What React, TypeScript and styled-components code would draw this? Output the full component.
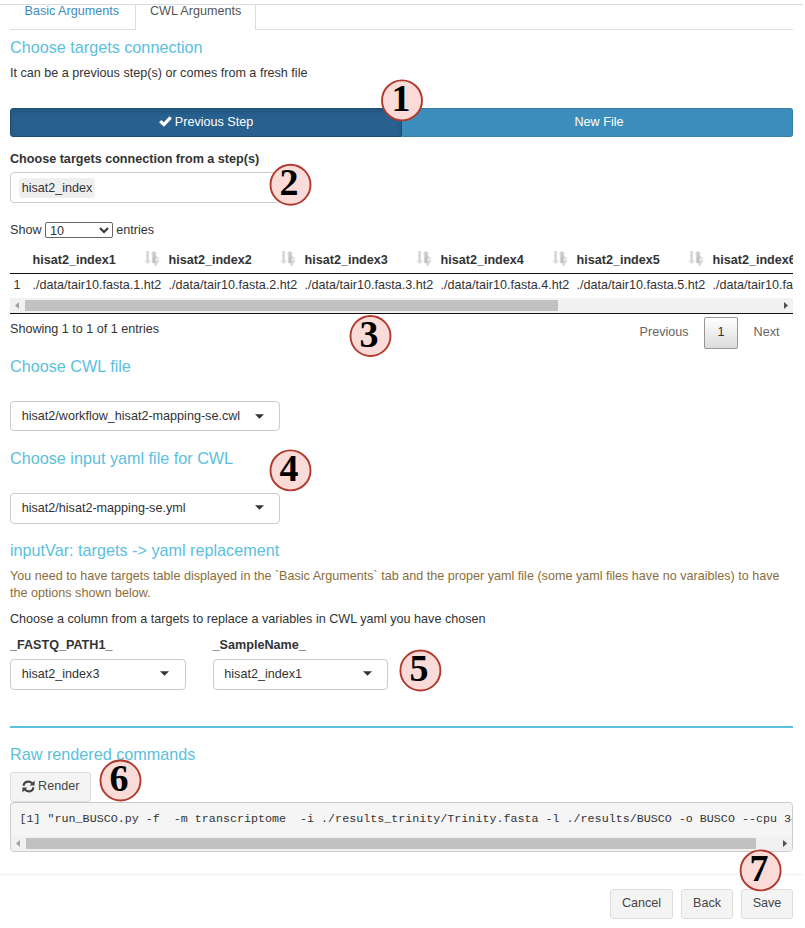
import React from "react";
import styled, { createGlobalStyle } from "styled-components";

const GlobalStyle = createGlobalStyle`
  * { box-sizing: border-box; }
  body {
    margin: 0;
    background: #fff;
    color: #333;
    font-family: "Liberation Sans", Arial, sans-serif;
    font-size: 12.6px;
    line-height: 18px;
  }
`;

const Page = styled.div`
  position: relative;
  width: 805px;
  height: 928px;
  overflow: hidden;
  padding-top: 4px;
`;

const Modal = styled.div`
  width: 803px;
  border-top: 1px solid #d9dce1;
`;

const Body = styled.div`
  display: flex;
  flex-direction: column;
  height: 869px;
  padding: 0 10px;
`;

const Tabs = styled.div`
  display: flex;
  height: 25px;
  border-bottom: 1px solid #ddd;
`;

const Tab = styled.div<{ $active?: boolean }>`
  height: 25px;
  padding: ${(p) => (p.$active ? "0 14px" : "0 16px 0 14.5px")};
  line-height: 13px;
  color: ${(p) => (p.$active ? "#555" : "#3c8dbc")};
  background: ${(p) => (p.$active ? "#fff" : "transparent")};
  border: solid #ddd;
  border-width: ${(p) => (p.$active ? "0 1px" : "0")};
`;

const Heading = styled.h4<{ $top: number }>`
  margin: ${(p) => p.$top}px 0 0;
  height: 18px;
  font-size: 16.2px;
  font-weight: 400;
  line-height: 18px;
  color: #5bc0de;
`;

const Text = styled.p<{ $top: number; $warn?: boolean }>`
  margin: ${(p) => p.$top}px 0 0;
  line-height: ${(p) => (p.$warn ? 17 : 18)}px;
  color: ${(p) => (p.$warn ? "#8a6d3b" : "#333")};
`;

const Label = styled.label<{ $top: number }>`
  display: block;
  margin-top: ${(p) => p.$top}px;
  height: 18px;
  font-weight: 700;
`;

const Segmented = styled.div`
  display: grid;
  grid-template-columns: 392px 391px;
  margin-top: 26px;
  height: 29px;
`;

const Segment = styled.button<{ $active?: boolean }>`
  display: flex;
  justify-content: center;
  align-items: center;
  gap: 3px;
  padding: ${(p) => (p.$active ? "0 0 2px" : "0 0 2px 3px")};
  font: inherit;
  color: #fff;
  background: ${(p) => (p.$active ? "#286090" : "#3c8dbc")};
  border: 1px solid ${(p) => (p.$active ? "#204d74" : "#367fa9")};
  border-left-color: ${(p) => (p.$active ? "#204d74" : "#3c8dbc")};
  border-radius: ${(p) => (p.$active ? "3px 0 0 3px" : "0 3px 3px 0")};
  box-shadow: ${(p) => (p.$active ? "inset 0 3px 5px rgba(0, 0, 0, 0.125)" : "none")};
`;

const TagInput = styled.div`
  display: flex;
  align-items: center;
  margin-top: 4px;
  width: 270px;
  height: 31px;
  padding-left: 8px;
  border: 1px solid #ccc;
  border-radius: 4px;
`;

const Tag = styled.span`
  height: 20px;
  padding: 0 2.7px;
  line-height: 20px;
  background: #efefef;
  border-radius: 3px;
`;

const LengthRow = styled.div`
  display: flex;
  align-items: center;
  gap: 3.4px;
  margin-top: 18px;
  height: 18px;
`;

const LengthSelect = styled.select`
  width: 68px;
  height: 16px;
  padding: 0 0 2px;
  font: inherit;
  line-height: 12px;
  color: #333;
  background: #fff;
  border: 1px solid #666;
  border-radius: 2px;
`;

const TableFrame = styled.div`
  margin-top: 6px;
  height: 69px;
  overflow: hidden;
  border-bottom: 1px solid #111;
`;

const Row = styled.div<{ $head?: boolean }>`
  display: grid;
  grid-template-columns: 13.5px repeat(6, 136px);
  height: ${(p) => (p.$head ? 29 : 24)}px;
  line-height: ${(p) => (p.$head ? "31px" : "23px")};
  font-weight: ${(p) => (p.$head ? 700 : 400)};
  border-bottom: ${(p) => (p.$head ? "1px solid #111" : "0")};
  white-space: nowrap;
`;

const Cell = styled.div`
  display: flex;
  justify-content: space-between;
  padding: 0 0 0 9px;
`;

const IndexCell = styled.div`
  padding-left: 3.5px;
`;

const SortSvg = styled.svg`
  display: block;
  margin-top: 5px;
`;

const Scrollbar = styled.div<{ $h: number }>`
  display: flex;
  align-items: center;
  justify-content: space-between;
  height: ${(p) => p.$h}px;
  background: #f1f1f1;
`;

const Thumb = styled.div<{ $w: number; $gap: number }>`
  width: ${(p) => p.$w}px;
  height: 11px;
  margin-left: ${(p) => p.$gap}px;
  margin-right: auto;
  background: #c1c1c1;
`;

const ArrowSvg = styled.svg`
  margin: 0 5px;
`;

const TableFooter = styled.div`
  display: flex;
  justify-content: space-between;
  margin-top: 3px;
  height: 32px;
`;

const Info = styled.div`
  padding-top: 3px;
`;

const Pager = styled.div`
  display: flex;
  line-height: 30px;
  color: #666;
`;

const PageLink = styled.span`
  padding: 0 13.5px 0 15.5px;

  &:first-child {
    padding-right: 15.5px;
  }
`;

const CurrentPage = styled.span`
  width: 34px;
  line-height: 28px;
  text-align: center;
  color: #333;
  border: 1px solid #979797;
  border-radius: 2px;
  background: linear-gradient(#fff, #dcdcdc);
`;

const Select = styled.div<{ $w: number; $h?: number; $top: number; $end?: number }>`
  display: flex;
  align-items: center;
  justify-content: space-between;
  width: ${(p) => p.$w}px;
  height: ${(p) => p.$h ?? 31}px;
  margin-top: ${(p) => p.$top}px;
  padding: 0 ${(p) => p.$end ?? 15}px ${(p) => (p.$h ? 0 : 2)}px 10.7px;
  border: 1px solid #ccc;
  border-radius: 4px;
`;

const Caret = styled.svg`
  display: block;
`;

const Fields = styled.div`
  display: flex;
  gap: 26.6px;
  margin-top: 8px;
`;

const Rule = styled.div`
  margin-top: 36px;
  height: 2px;
  flex: none;
  background: #5bc0de;
`;

const Button = styled.button<{ $w: number }>`
  display: flex;
  align-items: center;
  justify-content: center;
  gap: 3.5px;
  width: ${(p) => p.$w}px;
  height: 30px;
  padding: 0 0 2px;
  font: inherit;
  color: #444;
  background: #f4f4f4;
  border: 1px solid #ddd;
  border-radius: 3px;
`;

const RenderRow = styled.div`
  margin-top: 9px;
`;

const Output = styled.div`
  height: 50px;
  overflow: hidden;
  background: #f5f5f5;
  border: 1px solid #ccc;
  border-radius: 4px;
`;

const Code = styled.pre`
  margin: 0;
  height: 33px;
  padding: 8px 0 0 8.5px;
  font-family: "Liberation Mono", monospace;
  font-size: 11.7px;
  line-height: 17px;
`;

const Footer = styled.div`
  display: flex;
  justify-content: flex-end;
  gap: 8px;
  padding: 14px 10px 0;
  border-top: 1px solid #f1f1f1;
`;

const Badge = styled.div<{ $x: number; $y: number }>`
  position: absolute;
  left: ${(p) => Math.floor(p.$x) - 22}px;
  top: ${(p) => Math.floor(p.$y) - 22}px;
  display: grid;
  width: 44px;
  height: 44px;
  color: #000;
  font: 700 38px/41px "Liberation Serif", "Times New Roman", serif;
  text-align: center;

  > * {
    grid-area: 1 / 1;
  }
`;

const Digit = styled.span`
  padding-right: 2px;
`;

const Ring = ({ dx, dy }: { dx: number; dy: number }) => (
  <svg width="44" height="44" viewBox="0 0 44 44">
    <circle cx={22 + dx} cy={22 + dy} r="20" fill="#fadbd8" stroke="#b03a2e" strokeWidth="1.9" />
  </svg>
);

const CheckIcon = () => (
  <svg width="13" height="11" viewBox="0 0 13 11">
    <path d="M.1 6.3 2.4 4 4.8 6.2 10.5.2 12.9 2.6 5 10.8Z" fill="#fff" />
  </svg>
);

const RefreshIcon = () => (
  <svg width="13" height="13" viewBox="0 0 13 13">
    <g fill="none" stroke="#444" strokeWidth="2.1">
      <path d="M1.5 5.8C2 3 4 1.6 6.4 1.6c1.6 0 2.7.6 3.9 1.8" />
      <path d="M11.5 7.2C11 10 9 11.4 6.6 11.4c-1.6 0-2.7-.6-3.9-1.8" />
    </g>
    <path d="M12.6.4V5.4H7.6Z M.4 12.6V7.6H5.4Z" fill="#444" />
  </svg>
);

const SortIcon = () => (
  <SortSvg width="16" height="18" viewBox="0 0 16 18">
    <path d="M2.2 1H5v9.5H7L3.6 14 .2 10.5h2Z" fill="#d9d9d9" />
    <path d="M10 .8 13.3 4.3H11.4V13H8.5V4.3H6.6Z" fill="#d0d0d0" />
    <path d="M11.3 4.5 15.3 9.2H7.5Z M7.5 10.2h8L11.6 16.5Z" fill="#c8c8c8" fillOpacity=".7" />
    <path d="M8.6 5h2.8v8H8.6Z" fill="#b9b9b9" fillOpacity=".55" />
  </SortSvg>
);

const ScrollArrow = ({ right = false }: { right?: boolean }) => (
  <ArrowSvg width="4" height="7" viewBox="0 0 4 7">
    <path d={right ? "M0 0 4 3.5 0 7Z" : "M4 0 0 3.5 4 7Z"} fill={right ? "#505050" : "#a3a3a3"} />
  </ArrowSvg>
);

const Dropdown = (p: { value: string; w: number; h?: number; top: number; end?: number }) => (
  <Select $w={p.w} $h={p.h} $top={p.top} $end={p.end}>
    <span>{p.value}</span>
    <Caret width="9" height="5" viewBox="0 0 9 5">
      <path d="M0 .3H9L4.5 4.7Z" fill="#333" />
    </Caret>
  </Select>
);

const columns = [1, 2, 3, 4, 5, 6];

const badges = [
  { x: 402, y: 100.4 },
  { x: 290.5, y: 184.8 },
  { x: 370.5, y: 336 },
  { x: 290.5, y: 470.4 },
  { x: 420.4, y: 670.5 },
  { x: 120.5, y: 780.5 },
  { x: 760.6, y: 870.4 },
];

export default function App() {
  return (
    <Page>
      <GlobalStyle />
      <Modal>
        <Body>
          <Tabs>
            <Tab>Basic Arguments</Tab>
            <Tab $active>CWL Arguments</Tab>
          </Tabs>
          <Heading $top={8}>Choose targets connection</Heading>
          <Text $top={8}>It can be a previous step(s) or comes from a fresh file</Text>
          <Segmented>
            <Segment $active>
              <CheckIcon />
              Previous Step
            </Segment>
            <Segment>New File</Segment>
          </Segmented>
          <Label $top={13}>Choose targets connection from a step(s)</Label>
          <TagInput>
            <Tag>hisat2_index</Tag>
          </TagInput>
          <LengthRow>
            <span>Show</span>
            <LengthSelect defaultValue="10">
              <option>10</option>
              <option>25</option>
              <option>50</option>
              <option>100</option>
            </LengthSelect>
            <span>entries</span>
          </LengthRow>
          <TableFrame>
            <Row $head>
              <IndexCell />
              {columns.map((n) => (
                <Cell key={n}>
                  hisat2_index{n}
                  <SortIcon />
                </Cell>
              ))}
            </Row>
            <Row>
              <IndexCell>1</IndexCell>
              {columns.map((n) => (
                <Cell key={n}>./data/tair10.fasta.{n}.ht2</Cell>
              ))}
            </Row>
            <Scrollbar $h={15}>
              <ScrollArrow />
              <Thumb $w={533} $gap={1} />
              <ScrollArrow right />
            </Scrollbar>
          </TableFrame>
          <TableFooter>
            <Info>Showing 1 to 1 of 1 entries</Info>
            <Pager>
              <PageLink>Previous</PageLink>
              <CurrentPage>1</CurrentPage>
              <PageLink>Next</PageLink>
            </Pager>
          </TableFooter>
          <Heading $top={8}>Choose CWL file</Heading>
          <Dropdown value="hisat2/workflow_hisat2-mapping-se.cwl" w={270} h={30} top={26} />
          <Heading $top={18}>Choose input yaml file for CWL</Heading>
          <Dropdown value="hisat2/hisat2-mapping-se.yml" w={270} top={26} />
          <Heading $top={17}>inputVar: targets -&gt; yaml replacement</Heading>
          <Text $top={9} $warn>
            You need to have targets table displayed in the `Basic Arguments` tab and the proper yaml file (some
            yaml files have no varaibles) to have the options shown below.
          </Text>
          <Text $top={8}>Choose a column from a targets to replace a variables in CWL yaml you have chosen</Text>
          <Fields>
            <div>
              <Label $top={0}>_FASTQ_PATH1_</Label>
              <Dropdown value="hisat2_index3" w={176} top={5} end={16} />
            </div>
            <div>
              <Label $top={0}>_SampleName_</Label>
              <Dropdown value="hisat2_index1" w={175.4} top={5} />
            </div>
          </Fields>
          <Rule />
          <Heading $top={17}>Raw rendered commands</Heading>
          <RenderRow>
            <Button $w={81}>
              <RefreshIcon />
              Render
            </Button>
          </RenderRow>
          <Output>
            <Code>
              {'[1] "run_BUSCO.py -f  -m transcriptome  -i ./results_trinity/Trinity.fasta -l ./results/BUSCO -o BUSCO --cpu 34'}
            </Code>
            <Scrollbar $h={15}>
              <ScrollArrow />
              <Thumb $w={730} $gap={1} />
              <ScrollArrow right />
            </Scrollbar>
          </Output>
        </Body>
        <Footer>
          <Button $w={63}>Cancel</Button>
          <Button $w={52}>Back</Button>
          <Button $w={52}>Save</Button>
        </Footer>
      </Modal>
      {badges.map((b, i) => (
        <Badge key={i} $x={b.x} $y={b.y}>
          <Ring dx={b.x % 1} dy={b.y % 1} />
          <Digit>{i + 1}</Digit>
        </Badge>
      ))}
    </Page>
  );
}
